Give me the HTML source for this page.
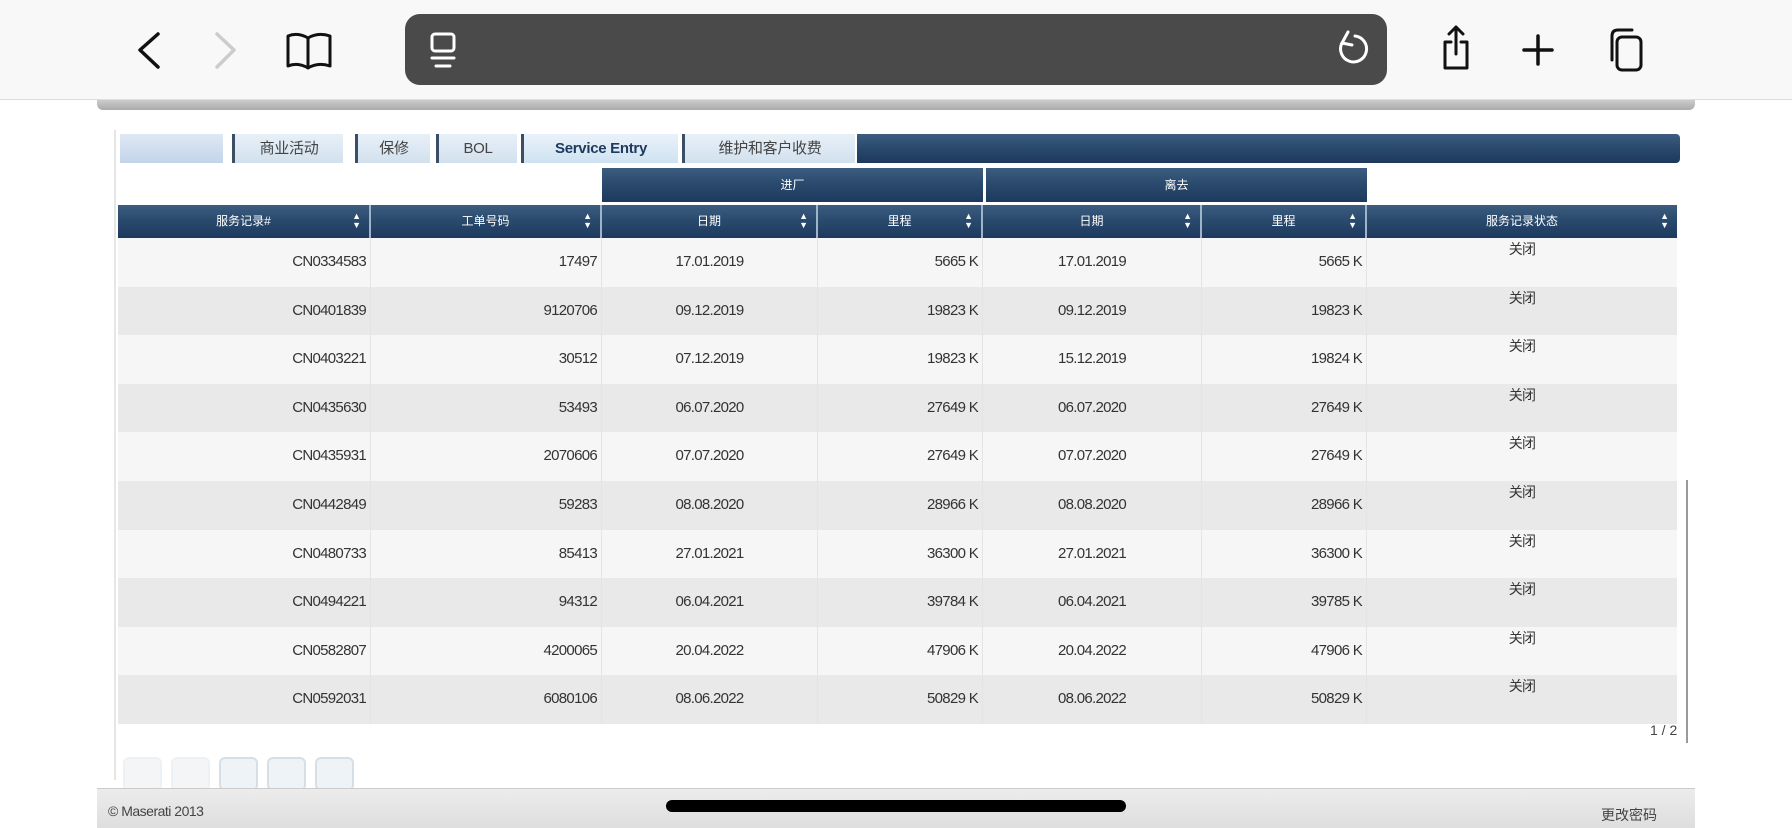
<!DOCTYPE html>
<html><head><meta charset="utf-8"><style>
*{margin:0;padding:0;box-sizing:border-box}
body{width:1792px;height:828px;background:#fff;position:relative;overflow:hidden;font-family:"Liberation Sans","Noto Sans CJK SC",sans-serif;color:#333}
.a{position:absolute}
.top{left:0;top:0;width:1792px;height:100px;background:#f8f8f8;border-bottom:1px solid #ddd}
.url{left:405px;top:14px;width:982px;height:71px;background:#4a4a4a;border-radius:15px}
.tab{top:134px;height:29px;background:linear-gradient(#e8f0f7,#d2e1ee);font-size:15px;line-height:29px;text-align:center;color:#444;border-left:3px solid #3a4f66;letter-spacing:-0.3px}
.hd{background:linear-gradient(#3d5d80 0%,#2a4a6e 45%,#1d3a5e 100%);color:#fff;font-size:12px;text-align:center}
.col{top:205px;height:33px;line-height:33px;border-right:2px solid #9fb4c9}
.col .s{position:absolute;right:8px;top:0;font-size:9px;line-height:9px;padding-top:7px}
.row{left:118px;width:1559px;height:48.6px}
.c{position:absolute;top:0;height:48.6px;line-height:48px;font-size:15px;letter-spacing:-0.7px;color:#333;border-right:1px solid #e4e4e4}
.r{text-align:right;padding-right:4px}
.m{text-align:center}
.st{text-align:center;line-height:22px;font-size:14px}
.pb{top:757px;width:39px;height:34px;border:2px solid #d6dee6;border-radius:6px;background:#eef3f8}
</style></head><body>
<div class="a top"></div>
<svg class="a" style="left:0;top:0" width="1792" height="100">
<g fill="none" stroke="#111" stroke-width="3.5" stroke-linecap="round" stroke-linejoin="round">
<path d="M158 34 L140 50 L158 67"/>
<path d="M217 34 L234 50 L217 67" stroke="#ccc"/>
<path d="M288 36 Q298 32 308 38 Q318 32 330 36 L330 66 Q318 62 308 68 Q298 62 288 66 Z M308 38 L308 68" stroke-width="3"/>
<path d="M1445 42 L1445 68 L1467 68 L1467 42 L1461 42 M1451 42 L1445 42 M1456 27 L1456 54 M1449 34 L1456 27 L1463 34" stroke-width="3"/>
<path d="M1538 36 L1538 64 M1524 50 L1552 50" stroke-width="3.5"/>
<rect x="1617" y="37" width="24" height="33" rx="5" stroke-width="3"/>
<path d="M1612 60 L1612 36 Q1612 30 1618 30 L1632 30" stroke-width="3"/>
</g></svg>
<div class="a url"></div>
<svg class="a" style="left:405px;top:14px" width="982" height="71">
<g fill="none" stroke="#fff" stroke-width="3" stroke-linecap="round">
<rect x="27" y="20" width="22" height="17" rx="3"/><path d="M27 44 L49 44 M31 52 L45 52"/>
<path d="M937 29 A13 13 0 1 0 950 22" /><path d="M943 18 L937 29 L947 31"/>
</g></svg>
<div class="a" style="left:97px;top:100px;width:1598px;height:10px;background:linear-gradient(#ccc,#aaa);border-radius:0 0 6px 6px"></div>
<div class="a" style="left:114px;top:130px;width:2px;height:650px;background:#e6e6e6"></div>

<div class="a tab" style="left:120px;width:103px;background:linear-gradient(#dfe8f4,#c3d4ea);border-left:none"></div>
<div class="a tab" style="left:232px;width:111px">商业活动</div>
<div class="a tab" style="left:355px;width:75px">保修</div>
<div class="a tab" style="left:436px;width:81px">BOL</div>
<div class="a tab" style="left:521px;width:157px;color:#1e3a5c;font-weight:bold;background:linear-gradient(#e9f2fa,#cfe2f1)">Service Entry</div>
<div class="a tab" style="left:682px;width:173px">维护和客户收费</div>
<div class="a hd" style="left:857px;top:134px;width:823px;height:29px;border-radius:0 4px 4px 0"></div>

<div class="a hd" style="left:602px;top:168px;width:381px;height:34px;line-height:34px">进厂</div>
<div class="a hd" style="left:986px;top:168px;width:381px;height:34px;line-height:34px">离去</div>

<div class="a hd col" style="left:118px;width:253px">服务记录#<span class="s">▲<br>▼</span></div>
<div class="a hd col" style="left:371px;width:231px">工单号码<span class="s">▲<br>▼</span></div>
<div class="a hd col" style="left:602px;width:216px">日期<span class="s">▲<br>▼</span></div>
<div class="a hd col" style="left:818px;width:165px">里程<span class="s">▲<br>▼</span></div>
<div class="a hd col" style="left:983px;width:219px">日期<span class="s">▲<br>▼</span></div>
<div class="a hd col" style="left:1202px;width:165px">里程<span class="s">▲<br>▼</span></div>
<div class="a hd col" style="left:1367px;width:310px;border-right:none">服务记录状态<span class="s">▲<br>▼</span></div>

<div id="rows"></div>
<script>
var d=[["CN0334583","17497","17.01.2019","5665 K","17.01.2019","5665 K"],
["CN0401839","9120706","09.12.2019","19823 K","09.12.2019","19823 K"],
["CN0403221","30512","07.12.2019","19823 K","15.12.2019","19824 K"],
["CN0435630","53493","06.07.2020","27649 K","06.07.2020","27649 K"],
["CN0435931","2070606","07.07.2020","27649 K","07.07.2020","27649 K"],
["CN0442849","59283","08.08.2020","28966 K","08.08.2020","28966 K"],
["CN0480733","85413","27.01.2021","36300 K","27.01.2021","36300 K"],
["CN0494221","94312","06.04.2021","39784 K","06.04.2021","39785 K"],
["CN0582807","4200065","20.04.2022","47906 K","20.04.2022","47906 K"],
["CN0592031","6080106","08.06.2022","50829 K","08.06.2022","50829 K"]];
var w=[[0,253,'r'],[253,231,'r'],[484,216,'m'],[700,165,'r'],[865,219,'m'],[1084,165,'r']];
var h='';
d.forEach(function(r,i){
h+='<div class="a row" style="top:'+(238+i*48.6)+'px;background:'+(i%2?'#e9e9e9':'#f6f6f6')+'">';
r.forEach(function(t,j){h+='<div class="c '+w[j][2]+'" style="left:'+w[j][0]+'px;width:'+w[j][1]+'px">'+t+'</div>';});
h+='<div class="c st" style="left:1249px;width:310px;border:none">关闭</div></div>';});
document.getElementById('rows').innerHTML=h;
</script>
<div class="a" style="left:1650px;top:722px;font-size:14px;color:#444">1 / 2</div>
<div class="a" style="left:1686px;top:480px;width:2px;height:263px;background:#999"></div>
<div class="a pb" style="left:123px;background:#f3f5f7;border-color:#eef1f4"></div>
<div class="a pb" style="left:171px;background:#f3f5f7;border-color:#eef1f4"></div>
<div class="a pb" style="left:219px"></div>
<div class="a pb" style="left:267px"></div>
<div class="a pb" style="left:315px"></div>
<div class="a" style="left:97px;top:788px;width:1598px;height:40px;background:linear-gradient(#ececec,#dedede);border-top:1px solid #ccc"></div>
<div class="a" style="left:108px;top:803px;font-size:14px;color:#444;letter-spacing:-0.5px">© Maserati 2013</div>
<div class="a" style="left:1601px;top:805px;font-size:14px;color:#444">更改密码</div>
<div class="a" style="left:666px;top:800px;width:460px;height:12px;background:#000;border-radius:6px"></div>
</body></html>
